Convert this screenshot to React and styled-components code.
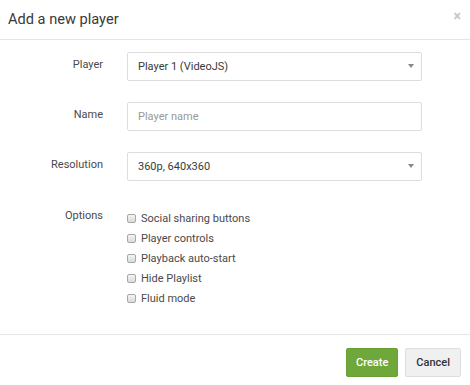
import React from "react";
import styled, { createGlobalStyle } from "styled-components";

const Global = createGlobalStyle`
  html, body { margin: 0; padding: 0; background: #fff; }
  body { font-family: Roboto, "Liberation Sans", Arial, sans-serif; color: #333; }
  * { box-sizing: border-box; }
`;

const Modal = styled.div`
  width: 470px;
  height: 385px;
  display: flex;
  flex-direction: column;
  background: #fff;
  overflow: hidden;
`;

const Header = styled.div`
  height: 40px;
  padding: 0 9px 0 8px;
  display: flex;
  align-items: center;
  justify-content: space-between;
  border-bottom: 1px solid #e5e5e5;
`;

const Title = styled.h4`
  margin: 0;
  font-size: 14.6px;
  font-weight: 400;
  color: #3a3a3a;
  line-height: 18px;
  padding-bottom: 2px;
`;

const Close = styled.span`
  font-size: 14px;
  font-weight: 700;
  color: #c8c8c8;
  line-height: 1;
  margin-top: -8px;
`;

const Body = styled.div`
  flex: 1;
  padding: 12px 48px 0 0;
  display: grid;
  grid-template-columns: 103px 295px;
  column-gap: 24px;
  row-gap: 21px;
  align-content: start;
  border-bottom: 1px solid #e5e5e5;
`;

const Label = styled.label`
  text-align: right;
  font-size: 11px;
  color: #4a4a4a;
  line-height: 14px;
  padding-top: ${(p) => p.$top || 6}px;
`;

const Field = styled.div`
  position: relative;
  height: 29px;
  border: 1px solid #ddd;
  border-radius: 2px;
  background: #fff;
  display: flex;
  align-items: center;
  padding: 0 10px;
  font-size: 11px;
  color: ${(p) => (p.$placeholder ? "#999" : "#3a3a3a")};
`;

const Caret = styled.span`
  position: absolute;
  right: 7px;
  top: 11px;
  width: 0;
  height: 0;
  border-left: 3px solid transparent;
  border-right: 3px solid transparent;
  border-top: 4px solid #888;
`;

const Options = styled.div`
  display: flex;
  flex-direction: column;
  padding-top: 6px;
`;

const Option = styled.div`
  height: 20px;
  display: flex;
  align-items: center;
  gap: 5px;
  font-size: 11px;
  color: #4a4a4a;
`;

const Box = styled.span`
  width: 9px;
  height: 9px;
  border: 1px solid #a8a8a8;
  border-radius: 2px;
  background: linear-gradient(#f4f4f4, #dadada);
  flex: none;
`;

const Footer = styled.div`
  height: 50px;
  display: flex;
  justify-content: flex-end;
  align-items: flex-start;
  gap: 7px;
  padding: 13px 9px 0 0;
`;

const Button = styled.button`
  height: 29px;
  padding: 0 ${(p) => (p.$primary ? 9 : 10)}px;
  border-radius: 2px;
  font-family: Roboto, "Liberation Sans", Arial, sans-serif;
  font-size: 11px;
  font-weight: 500;
  border: 1px solid ${(p) => (p.$primary ? "#68a033" : "#ddd")};
  background: ${(p) => (p.$primary ? "#6fa83a" : "#f0f0f0")};
  color: ${(p) => (p.$primary ? "#fff" : "#333")};
`;

const options = [
  "Social sharing buttons",
  "Player controls",
  "Playback auto-start",
  "Hide Playlist",
  "Fluid mode",
];

export default function App() {
  return (
    <>
      <Global />
      <Modal>
        <Header>
          <Title>Add a new player</Title>
          <Close>×</Close>
        </Header>
        <Body>
          <Label>Player</Label>
          <Field>
            Player 1 (VideoJS)
            <Caret />
          </Field>
          <Label>Name</Label>
          <Field $placeholder>Player name</Field>
          <Label>Resolution</Label>
          <Field>
            360p, 640x360
            <Caret />
          </Field>
          <Label $top={7}>Options</Label>
          <Options>
            {options.map((o) => (
              <Option key={o}>
                <Box />
                {o}
              </Option>
            ))}
          </Options>
        </Body>
        <Footer>
          <Button $primary>Create</Button>
          <Button>Cancel</Button>
        </Footer>
      </Modal>
    </>
  );
}
